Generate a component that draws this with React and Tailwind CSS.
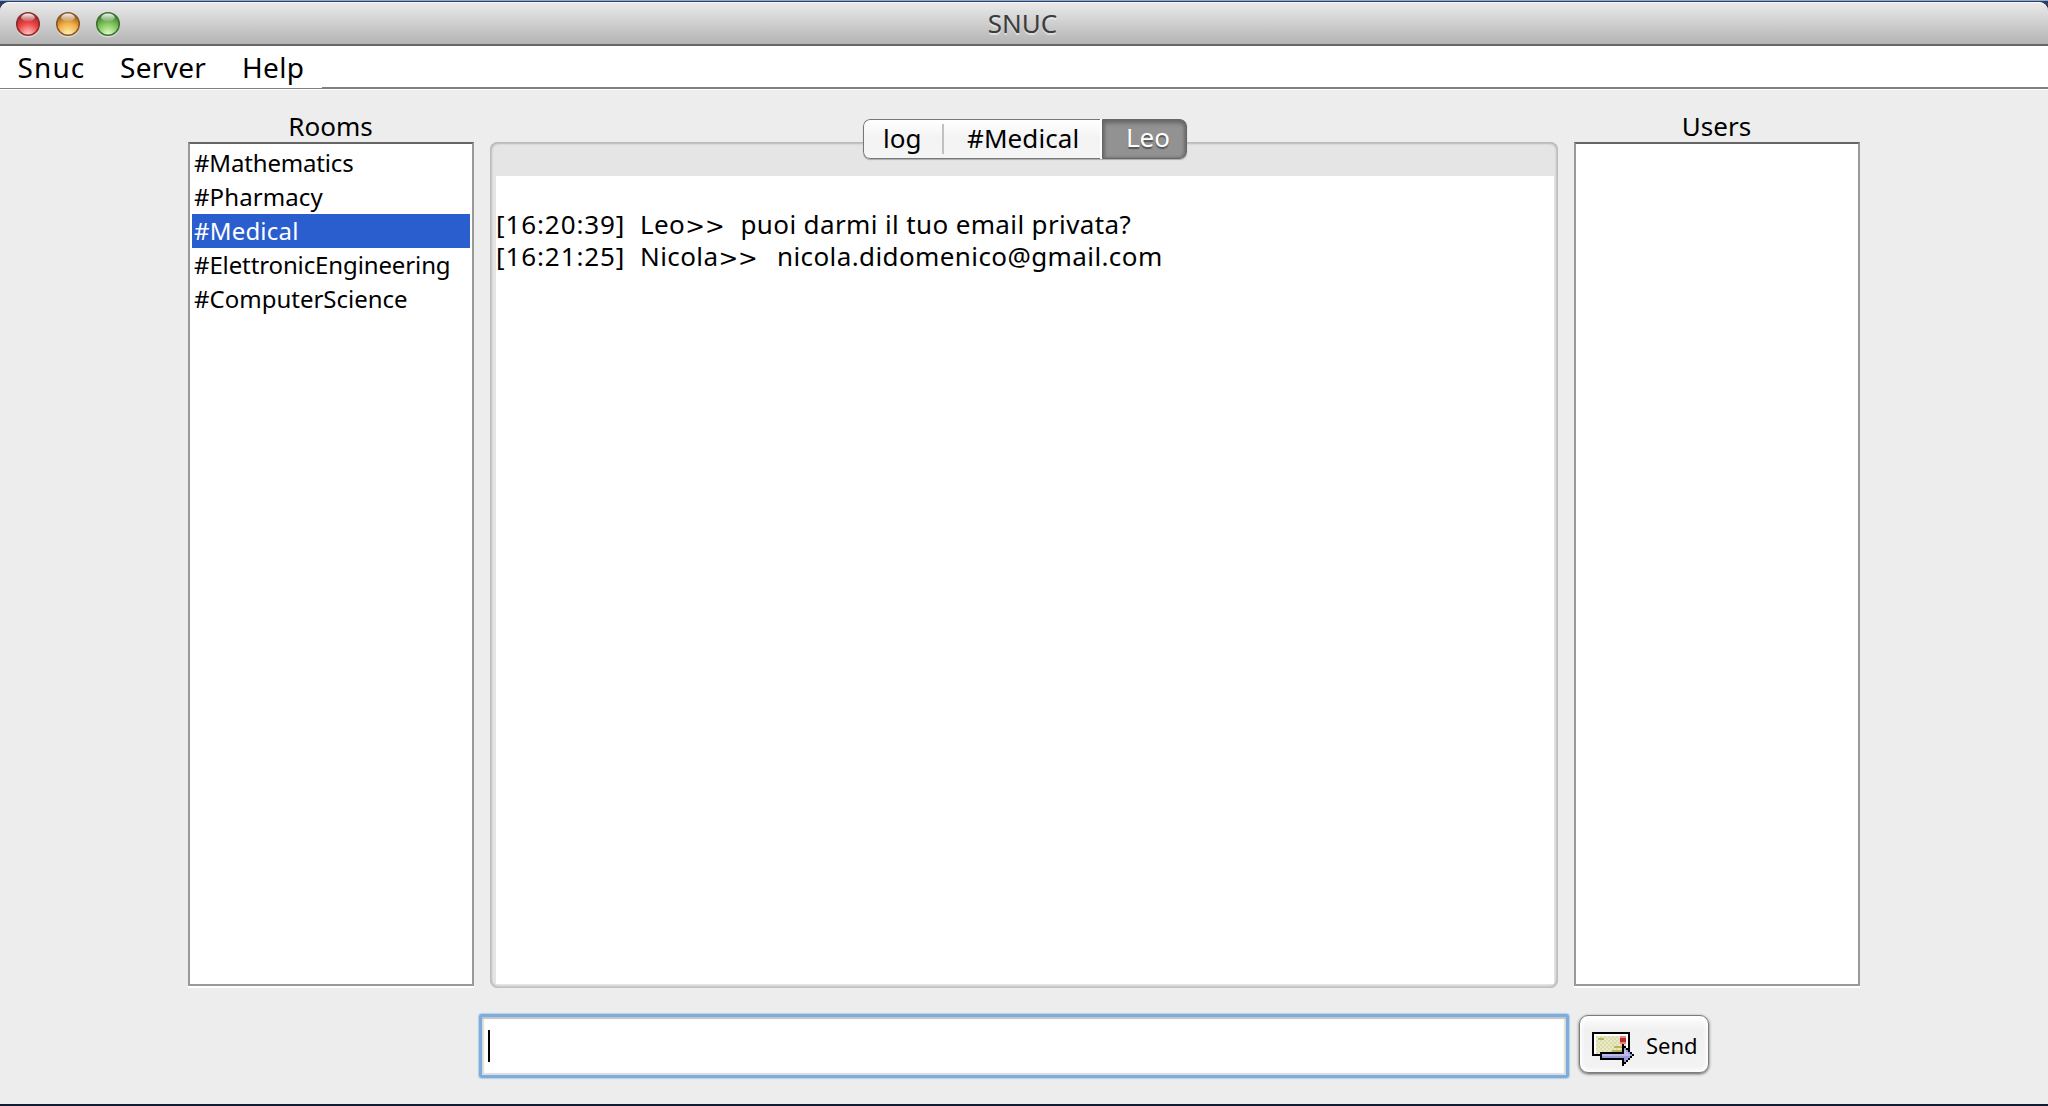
const rooms = [
  { name: '#Mathematics', fit: 'tracking-[-0.17px]' },
  { name: '#Pharmacy', fit: 'tracking-[0.1px]' },
  { name: '#Medical', fit: 'tracking-[0.2px]', selected: true },
  { name: '#ElettronicEngineering', fit: 'tracking-[-0.12px]' },
  { name: '#ComputerScience', fit: 'tracking-[0px]' },
];

const messages = [
  { time: '[16:20:39]', who: 'Leo', width: 'w-[100.5px]', fit: 'tracking-[0.37px]', text: 'puoi darmi il tuo email privata?' },
  { time: '[16:21:25]', who: 'Nicola', width: 'w-[137px]', fit: 'tracking-[0.4px]', text: 'nicola.didomenico@gmail.com' },
];

function TrafficLight({ id, dark, mid, light }) {
  return (
    <svg width="26" height="28" viewBox="0 0 26 28" className="block">
      <defs>
        <radialGradient id={id} cx="0.5" cy="0.95" r="0.9">
          <stop offset="0" stopColor={light} />
          <stop offset="0.55" stopColor={mid} />
          <stop offset="1" stopColor={dark} />
        </radialGradient>
        <linearGradient id={id + 'g'} x1="0" y1="0" x2="0" y2="1">
          <stop offset="0" stopColor="#fff" stopOpacity="0.95" />
          <stop offset="1" stopColor="#fff" stopOpacity="0.1" />
        </linearGradient>
      </defs>
      <circle cx="13" cy="14.5" r="12" fill="#fff" opacity="0.45" />
      <circle cx="13" cy="13" r="11.3" fill={'url(#' + id + ')'} stroke={dark} strokeWidth="1.5" />
      <ellipse cx="13" cy="6.5" rx="6.8" ry="4" fill={'url(#' + id + 'g)'} />
    </svg>
  );
}

function TitleBar() {
  return (
    <header className="grid h-11 grid-cols-3 items-center rounded-t-[9px] border-b-2 border-[#666] bg-linear-to-b from-[#ebebeb] to-[#b4b4b4] shadow-[inset_0_1px_0_#fafafa]">
      <div className="mt-[3px] flex gap-[14px] pl-[15px]">
        <TrafficLight id="close" dark="#8e2a2c" mid="#ee4444" light="#ffc9c4" />
        <TrafficLight id="minimize" dark="#8a5722" mid="#f0ab45" light="#fff6b4" />
        <TrafficLight id="zoom" dark="#3c7030" mid="#7fc45c" light="#e0ffc4" />
      </div>
      <h1 className="-mt-px pr-[3px] text-center text-[26px] leading-none text-[#3c3c3c] [text-shadow:0_2px_0_rgba(255,255,255,0.45)]">SNUC</h1>
    </header>
  );
}

function MenuBar() {
  return (
    <nav className="flex h-11 bg-white text-[28px] leading-[42px]">
      <div className="flex w-[322px] border-b border-white shadow-[inset_0_-1px_0_#808080]">
        <span className="w-[103px] pl-[17.5px] tracking-[1.1px]">Snuc</span>
        <span className="w-[122px] pl-[17px] tracking-[0.3px]">Server</span>
        <span className="pl-[17px] tracking-[0.3px]">Help</span>
      </div>
      <div className="h-[43px] flex-1 border-b-2 border-[#808080]" />
    </nav>
  );
}

function ListPanel({ title, children }) {
  return (
    <section className="flex w-[286px] flex-col">
      <h2 className="h-[34px] pr-px text-center text-[26px] leading-[36px]">{title}</h2>
      <div className="h-[844px] border-2 border-[#999] border-t-[#666] bg-white p-0.5 shadow-[0_2px_0_#fff]">{children}</div>
    </section>
  );
}

function Message({ time, who, width, fit, text }) {
  return (
    <p className="flex">
      <span className="w-[144px] tracking-[0.9px]">{time}</span>
      <span className={width}>
        <span className="tracking-[0.4px]">{who}</span>
        <span className="font-['DejaVu_Sans'] text-[23.5px] leading-none">&gt;&gt;</span>
      </span>
      <span className={fit}>{text}</span>
    </p>
  );
}

function Conversation() {
  return (
    <section className="relative mt-[34px] h-[846px] w-[1068px] rounded-[8px] bg-[#e5e5e5] pt-[34px] pr-1 pb-1 pl-1.5 shadow-[inset_0_2px_2px_#b9b9b9,inset_2px_0_2px_#bebebe,inset_-2px_0_2px_#bebebe,inset_0_-2px_2px_#c4c4c4]">
      <div className="h-full bg-white pt-8 text-[26px] leading-8 whitespace-nowrap">
        {messages.map((message) => (
          <Message key={message.time} {...message} />
        ))}
      </div>
      <div className="absolute -top-[23px] left-[373px] flex h-10 w-[324px] overflow-hidden rounded-[7px] text-[26px] leading-[35px] shadow-[0_1px_1px_#aaa]">
        <div className="flex w-[237px] items-center rounded-l-[7px] border-y-[1.5px] border-l-[1.5px] border-[#777] bg-linear-to-b from-white via-[#f3f3f3] via-50% to-[#f5f5f5]">
          <span className="h-[30px] w-[80px] border-r-2 border-[#c0c0c0] pl-[19px] leading-[28px]">log</span>
          <span className="h-[30px] pl-[23px] leading-[28px] tracking-[0.1px]">#Medical</span>
        </div>
        <div className="w-0.5 bg-white" />
        <div className="flex-1 rounded-r-[7px] border border-[#666] bg-[#929292] pl-[23px] text-white shadow-[inset_0_3px_4px_#666,inset_-2px_0_3px_#747474,inset_2px_0_3px_#777] [text-shadow:0_2px_1px_#555]">Leo</div>
      </div>
    </section>
  );
}

function SendIcon() {
  return (
    <svg width="42" height="34" viewBox="0 0 21 17" shapeRendering="crispEdges" className="block">
      <defs>
        <pattern id="paper" width="2" height="2" patternUnits="userSpaceOnUse">
          <rect width="2" height="2" fill="#e9e9c4" />
          <rect width="1" height="1" fill="#dcdcb2" />
          <rect x="1" y="1" width="1" height="1" fill="#dcdcb2" />
        </pattern>
      </defs>
      <rect width="19" height="12" fill="#000" />
      <rect x="1" y="1" width="17" height="10" fill="#fff" />
      <rect x="2" y="2" width="15" height="9" fill="url(#paper)" />
      <path d="M3 3h3v1H3zM11 7h4v1h-4zM10 9h5v1h-5z" fill="#bcb556" />
      <path d="M14 2h3v4h-3z" fill="#f08080" />
      <path d="M14 3h3v2h-3z" fill="#b82c2c" />
      <path d="M4 10h11V6h1v1h1v1h1v1h1v1h1v1h1v1h-1v1h-1v1h-1v1h-1v1h-1v1h-1v-3H4z" fill="#000" />
      <path d="M5 11h11V8h1v1h1v1h1v1h1v1h-1v1h-1v1h-1v1h-1v-2H5z" fill="#9c9cdc" />
      <path d="M5 11h11V9h1v1h1v1h1v1H5z" fill="#b9b9ee" />
    </svg>
  );
}

function Composer() {
  return (
    <footer className="mt-[26px] flex items-start pl-[479px]">
      <div className="h-16 w-[1090px] rounded-[3px] border-[3px] border-[#7eaddb] bg-white pt-[13px] pl-1.5 shadow-[0_0_1px_1px_#b4d0ec,inset_0_2px_1px_#c4c4c4,inset_2px_0_1px_#ddd,inset_-2px_0_1px_#ddd,inset_0_-2px_1px_#ddd]">
        <div className="h-8 w-0.5 bg-black" />
      </div>
      <button className="mt-px ml-[10px] flex h-[58px] w-[130px] items-start rounded-[9px] border border-[#7c7c7c] bg-linear-to-b from-white via-[#f0f0f0] via-25% to-[#f3f3f3] pt-4 pl-3 shadow-[0_1px_3px_#555,inset_0_0_4px_2px_#fff]">
        <SendIcon />
        <span className="-mt-px pl-3 text-[22px] leading-[28px]">Send</span>
      </button>
    </footer>
  );
}

export default function App() {
  return (
    <div className="h-[1106px] w-[2048px] overflow-hidden border-b-2 border-[#111c33] bg-[#2c3e63] font-['Noto_Sans','Open_Sans',sans-serif] text-black">
      <div className="h-0.5 border-t border-[#93a9d0]" />
      <TitleBar />
      <MenuBar />
      <main className="h-[1014px] bg-[#ededed] pt-[18px]">
        <div className="flex gap-4 pl-[188px]">
          <ListPanel title="Rooms">
            <ul className="text-[24px] leading-[34px]">
              {rooms.map((room) => (
                <li key={room.name} className={room.selected ? 'h-[34px] bg-[#2a5dce] pl-0.5 text-white' : 'h-[34px] pl-0.5'}>
                  <span className={room.fit}>{room.name}</span>
                </li>
              ))}
            </ul>
          </ListPanel>
          <Conversation />
          <ListPanel title="Users" />
        </div>
        <Composer />
      </main>
    </div>
  );
}
